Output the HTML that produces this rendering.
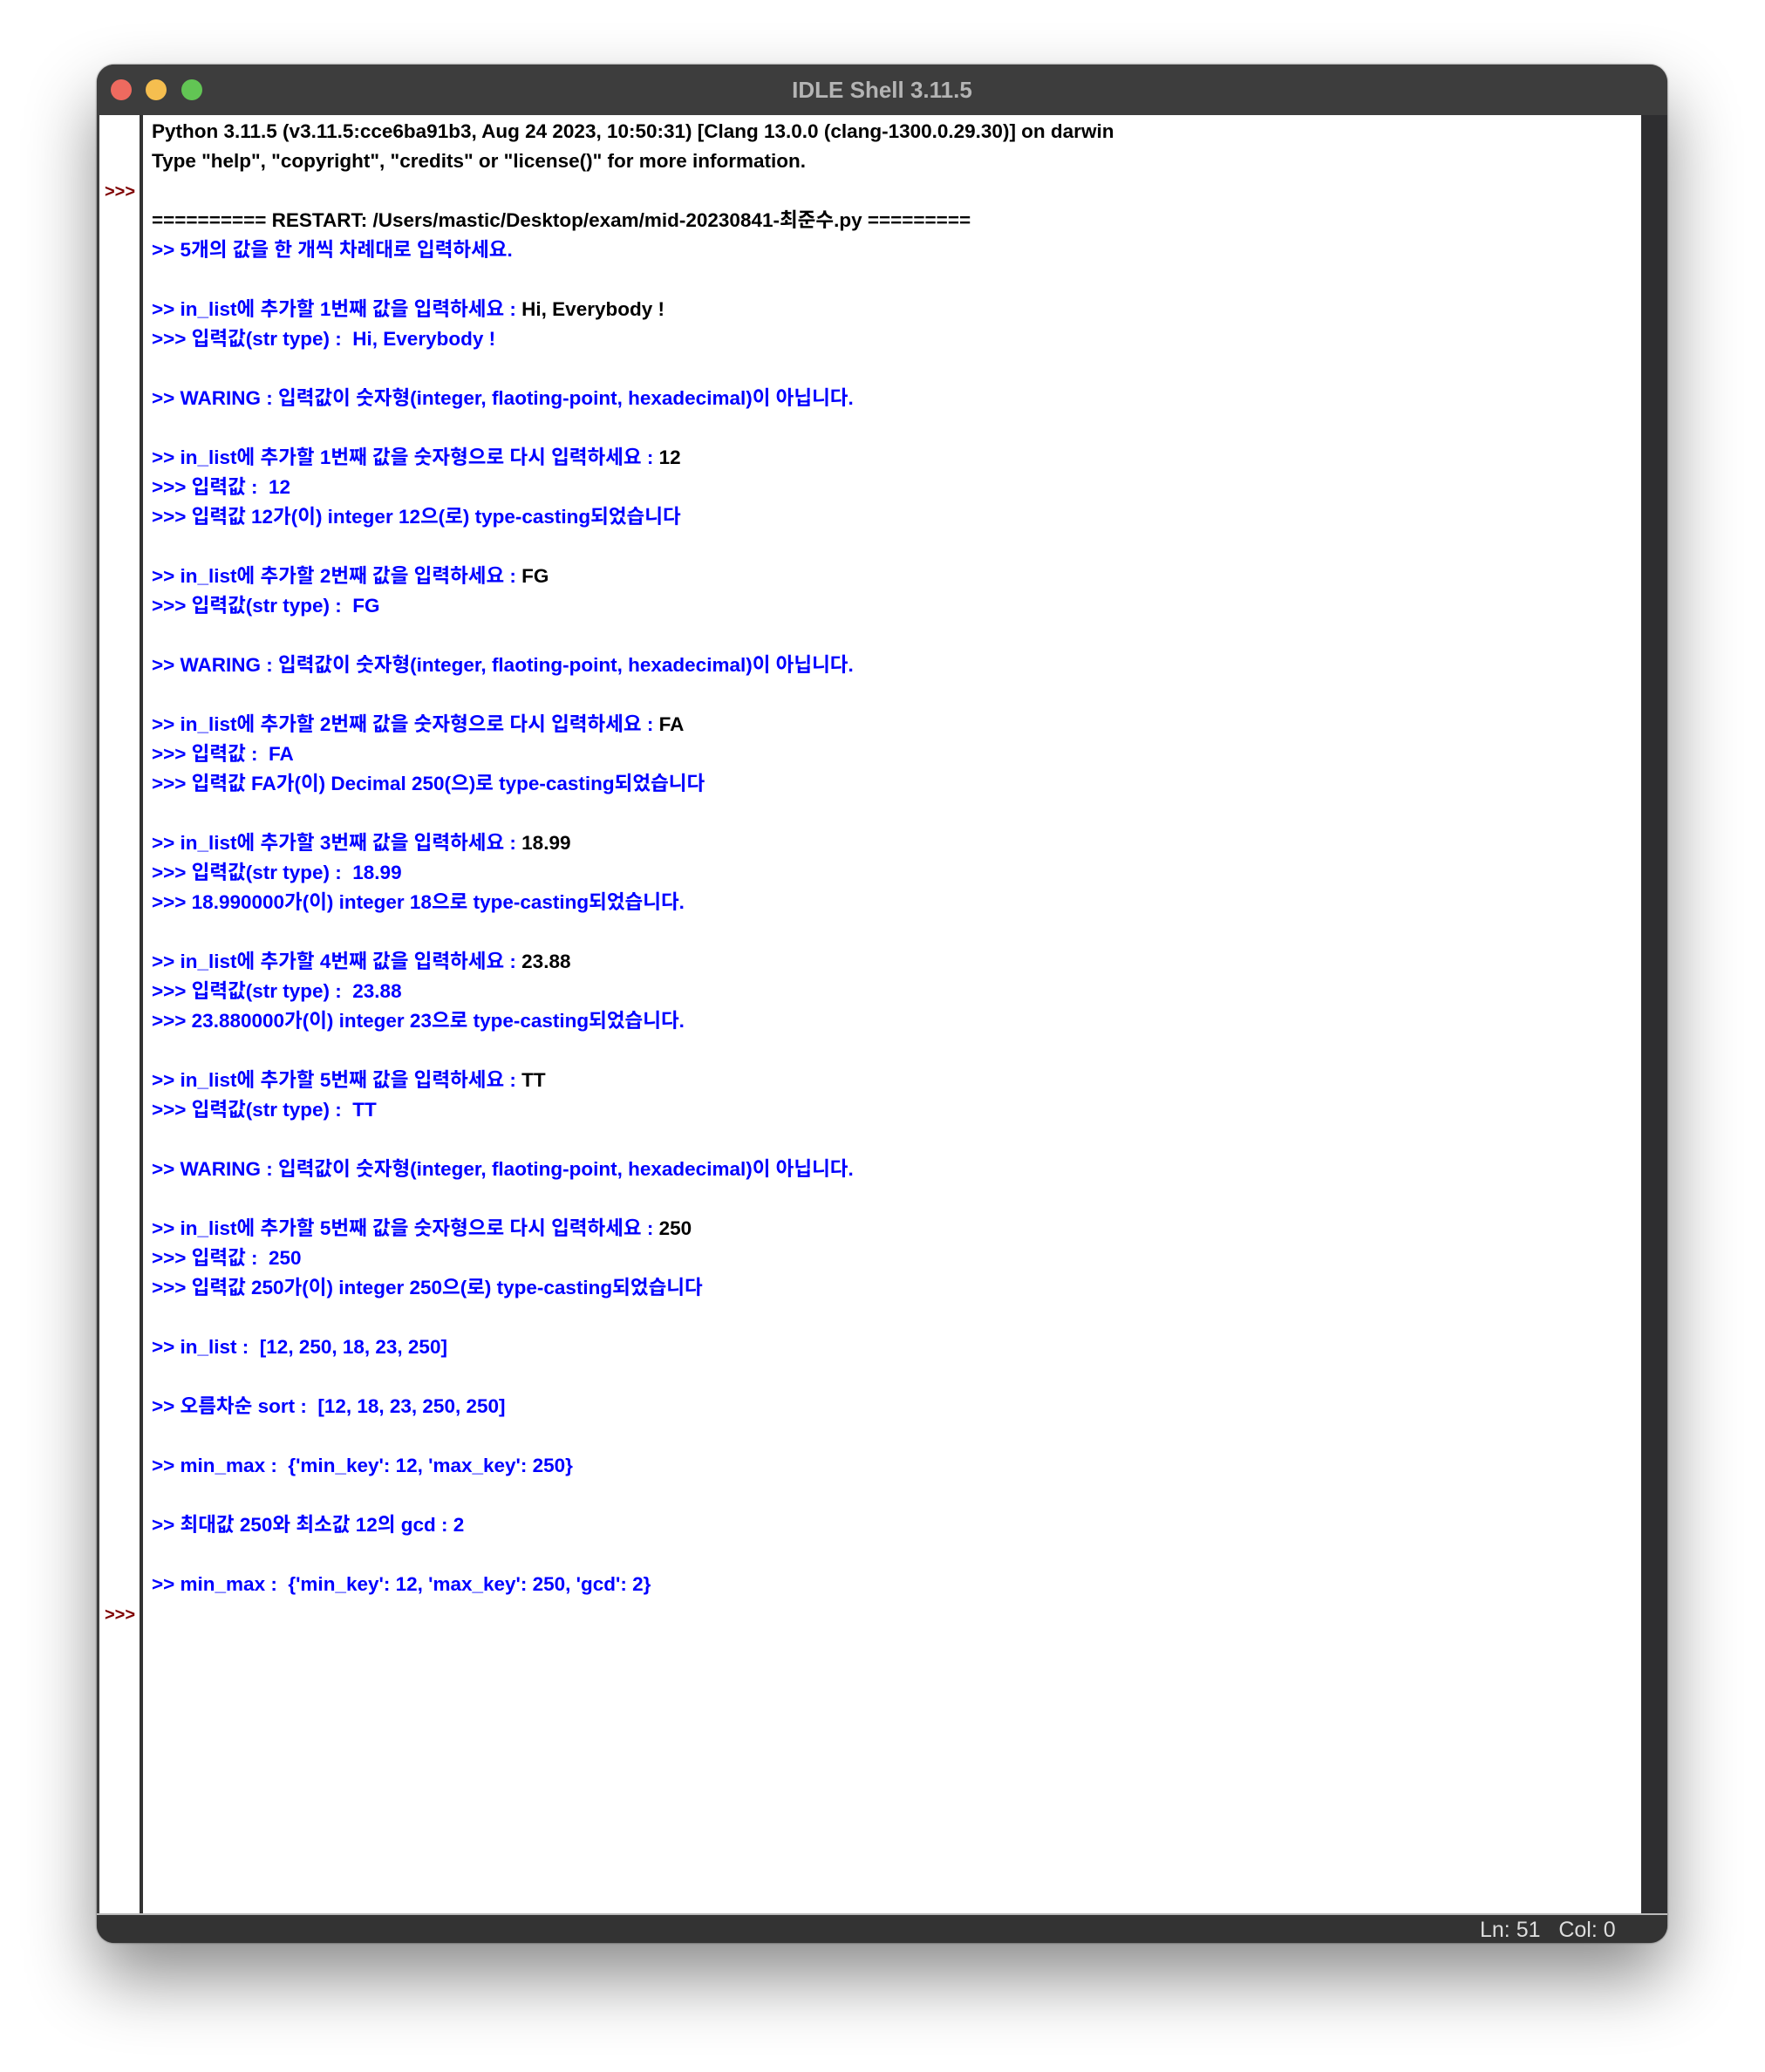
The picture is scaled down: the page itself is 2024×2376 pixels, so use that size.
<!DOCTYPE html>
<html><head><meta charset="utf-8"><style>
html,body{margin:0;padding:0;background:#fff;width:2024px;height:2376px;overflow:hidden}
.win{position:absolute;left:111px;top:74px;width:1801px;height:2154px;border-radius:20px;background:#3d3d3d;box-shadow:0 40px 80px rgba(0,0,0,.45),0 0 2px rgba(0,0,0,.6);overflow:hidden}
.title{position:absolute;left:0;top:0;width:100%;height:58px;background:#3d3d3d;text-align:center;font:bold 26px "Liberation Sans",sans-serif;color:#b4b4b4;line-height:58px}
.dot{position:absolute;top:17px;width:24px;height:24px;border-radius:50%}
.body{position:absolute;left:3px;top:58px;width:1768px;height:2062px;background:#fff}
.gut{position:absolute;left:46px;top:0;width:4px;height:100%;background:#333}
.sb{position:absolute;left:1771px;top:58px;width:30px;height:2062px;background:#2e2e30}
.status{position:absolute;left:0;top:2120px;width:100%;height:34px;background:#333;border-top:2px solid #bbb;box-sizing:border-box}
.st{position:absolute;left:1586px;top:2px;font:25px "Liberation Sans",sans-serif;color:#ddd;line-height:30px;white-space:pre}
.txt{position:absolute;left:60px;top:2px;font:bold 22.5px "Liberation Sans","Noto Sans CJK KR",sans-serif;line-height:34px;white-space:pre;color:#0000ff}
.k{color:#000}
.pr{position:absolute;left:6px;font:bold 20px "Liberation Sans",sans-serif;color:#7f0000;line-height:34px}
</style></head><body>
<div class="win">
<div class="title">IDLE Shell 3.11.5</div>
<div class="dot" style="left:16px;background:#ee6a5f"></div>
<div class="dot" style="left:56px;background:#f5be4f"></div>
<div class="dot" style="left:97px;background:#62c554"></div>
<div class="body">
<div class="gut"></div>
<div class="pr" style="top:71px">&gt;&gt;&gt;</div>
<div class="pr" style="top:1703px">&gt;&gt;&gt;</div>
<div class="txt"><span class="k">Python 3.11.5 (v3.11.5:cce6ba91b3, Aug 24 2023, 10:50:31) [Clang 13.0.0 (clang-1300.0.29.30)] on darwin</span>
<span class="k">Type "help", "copyright", "credits" or "license()" for more information.</span>

<span class="k">========== RESTART: /Users/mastic/Desktop/exam/mid-20230841-최준수.py =========</span>
&gt;&gt; 5개의 값을 한 개씩 차례대로 입력하세요.

&gt;&gt; in_list에 추가할 1번째 값을 입력하세요 : <span class="k">Hi, Everybody !</span>
&gt;&gt;&gt; 입력값(str type) :  Hi, Everybody !

&gt;&gt; WARING : 입력값이 숫자형(integer, flaoting-point, hexadecimal)이 아닙니다.

&gt;&gt; in_list에 추가할 1번째 값을 숫자형으로 다시 입력하세요 : <span class="k">12</span>
&gt;&gt;&gt; 입력값 :  12
&gt;&gt;&gt; 입력값 12가(이) integer 12으(로) type-casting되었습니다

&gt;&gt; in_list에 추가할 2번째 값을 입력하세요 : <span class="k">FG</span>
&gt;&gt;&gt; 입력값(str type) :  FG

&gt;&gt; WARING : 입력값이 숫자형(integer, flaoting-point, hexadecimal)이 아닙니다.

&gt;&gt; in_list에 추가할 2번째 값을 숫자형으로 다시 입력하세요 : <span class="k">FA</span>
&gt;&gt;&gt; 입력값 :  FA
&gt;&gt;&gt; 입력값 FA가(이) Decimal 250(으)로 type-casting되었습니다

&gt;&gt; in_list에 추가할 3번째 값을 입력하세요 : <span class="k">18.99</span>
&gt;&gt;&gt; 입력값(str type) :  18.99
&gt;&gt;&gt; 18.990000가(이) integer 18으로 type-casting되었습니다.

&gt;&gt; in_list에 추가할 4번째 값을 입력하세요 : <span class="k">23.88</span>
&gt;&gt;&gt; 입력값(str type) :  23.88
&gt;&gt;&gt; 23.880000가(이) integer 23으로 type-casting되었습니다.

&gt;&gt; in_list에 추가할 5번째 값을 입력하세요 : <span class="k">TT</span>
&gt;&gt;&gt; 입력값(str type) :  TT

&gt;&gt; WARING : 입력값이 숫자형(integer, flaoting-point, hexadecimal)이 아닙니다.

&gt;&gt; in_list에 추가할 5번째 값을 숫자형으로 다시 입력하세요 : <span class="k">250</span>
&gt;&gt;&gt; 입력값 :  250
&gt;&gt;&gt; 입력값 250가(이) integer 250으(로) type-casting되었습니다

&gt;&gt; in_list :  [12, 250, 18, 23, 250]

&gt;&gt; 오름차순 sort :  [12, 18, 23, 250, 250]

&gt;&gt; min_max :  {'min_key': 12, 'max_key': 250}

&gt;&gt; 최대값 250와 최소값 12의 gcd : 2

&gt;&gt; min_max :  {'min_key': 12, 'max_key': 250, 'gcd': 2}
</div>
</div>
<div class="sb"></div>
<div class="status"><div class="st">Ln: 51   Col: 0</div></div>
</div>
</body></html>
